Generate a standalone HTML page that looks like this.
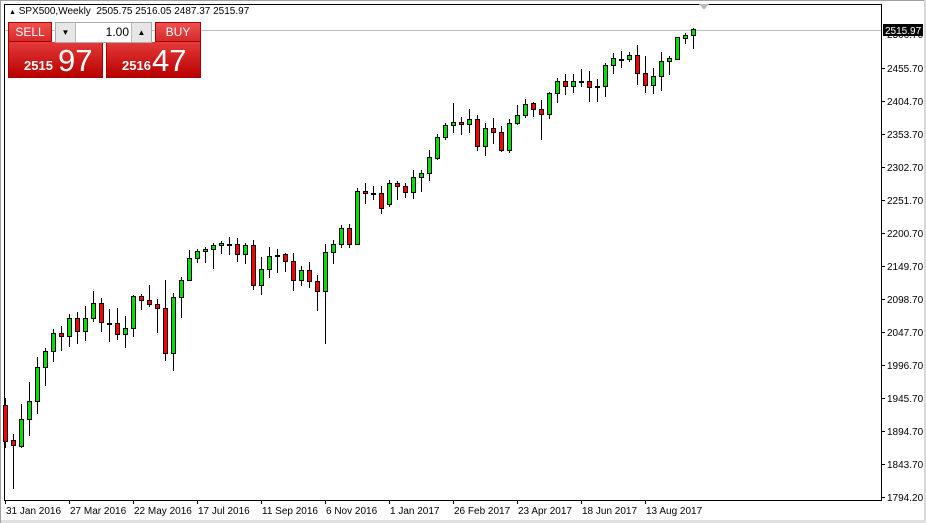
<!DOCTYPE html>
<html><head><meta charset="utf-8"><style>
html,body{margin:0;padding:0;background:#fff;width:926px;height:523px;overflow:hidden;font-family:"Liberation Sans",Tahoma,sans-serif}
svg{position:absolute;left:0;top:0}
.p{position:absolute;box-sizing:border-box}
.red{background:linear-gradient(#e53a3a,#b80000);color:#fff}
</style></head><body>
<svg id="s" width="926" height="523" shape-rendering="crispEdges"></svg>
<div class="p red" style="left:8px;top:22px;width:44px;height:20px;border:1px solid #a00;text-align:center;font-size:12px;line-height:18px;background:linear-gradient(#f05050,#d62a2a)">SELL</div>
<div class="p red" style="left:8px;top:42px;width:95px;height:36px;border:1px solid #a00;border-top:none"><span style="position:absolute;left:15px;top:16px;font-size:13px;font-weight:bold">2515</span><span style="position:absolute;left:49px;top:1px;font-size:31px">97</span></div>
<div class="p red" style="left:155px;top:22px;width:46px;height:20px;border:1px solid #a00;text-align:center;font-size:12px;line-height:18px;background:linear-gradient(#f05050,#d62a2a)">BUY</div>
<div class="p red" style="left:106px;top:42px;width:95px;height:36px;border:1px solid #a00;border-top:none"><span style="position:absolute;left:15px;top:16px;font-size:13px;font-weight:bold">2516</span><span style="position:absolute;left:45px;top:1px;font-size:31px">47</span></div>
<div class="p" style="left:55px;top:22px;width:97px;height:21px;border:1px solid #aaa;background:#fff"></div>
<div class="p" style="left:56px;top:23px;width:20px;height:19px;background:#e6e6e6;border-right:1px solid #bbb;font-size:8px;text-align:center;line-height:19px">▼</div>
<div class="p" style="left:131px;top:23px;width:20px;height:19px;background:#e6e6e6;border-left:1px solid #bbb;font-size:8px;text-align:center;line-height:19px">▲</div>
<div class="p" style="left:78px;top:23px;width:51px;height:19px;font-size:12px;text-align:right;line-height:19px">1.00</div>
<div class="p" style="left:9px;top:5px;font-size:10px;line-height:13px;white-space:nowrap"><span style="font-size:7px">▲</span> SPX500,Weekly&nbsp; 2505.75 2516.05 2487.37 2515.97</div>
<script>
var s=document.getElementById('s'),h='';
function r(x,y,w,hh,c){h+='<rect x="'+x+'" y="'+y+'" width="'+w+'" height="'+hh+'" fill="'+c+'"/>';}
function t(x,y,str,c,a){h+='<text x="'+x+'" y="'+y+'" font-size="10" fill="'+(c||'#000')+'" font-family="Liberation Sans,Tahoma,sans-serif"'+(a?' text-anchor="'+a+'"':'')+'>'+str+'</text>';}
r(0,0,926,1,'#a0a0a0');r(924,0,2,523,'#d8d8d8');r(0,520,926,3,'#e0e0e0');r(0,0,1,523,'#a0a0a0');
r(4,4,878,1,'#000');r(4,4,1,497,'#000');r(881,4,1,497,'#000');r(4,500,878,1,'#000');
h+='<polygon points="699,4 709,4 704,10" fill="#bbb"/>';
r(5,30,876,1,'#c0c0c0');
var P=[[2455.70,68],[2404.70,101],[2353.70,134],[2302.70,167],[2251.70,200],[2200.70,233],[2149.70,266],[2098.70,299],[2047.70,332],[1996.70,365],[1945.70,398],[1894.70,431],[1843.70,464],[1794.20,497]];
P.forEach(function(p){r(882,p[1],3,1,'#000');t(887,p[1]+4,p[0].toFixed(2));});
t(887,38,'2506.70');
var D=['31 Jan 2016','27 Mar 2016','22 May 2016','17 Jul 2016','11 Sep 2016','6 Nov 2016','1 Jan 2017','26 Feb 2017','23 Apr 2017','18 Jun 2017','13 Aug 2017'];
D.forEach(function(d,i){var x=5+64*i;r(x,500,1,4,'#000');t(x+1,514,d);});
var C=[[405,441,398,447],[440,445,434,488],[446,419,404,447],[419,401,382,435],[401,367,357,413],[367,351,348,385],[351,333,329,361],[333,336,326,350],[336,318,314,346],[318,331,312,343],[331,318,306,340],[318,303,291,321],[303,322,298,331],[323,323,309,341],[323,334,308,339],[334,328,316,347],[328,296,295,336],[296,300,294,309],[300,304,285,306],[304,308,299,332],[308,353,280,360],[353,297,293,370],[297,280,277,317],[280,258,250,280],[258,251,249,262],[251,249,247,262],[249,245,243,268],[245,243,241,253],[244,244,237,254],[244,254,238,261],
[254,245,243,263],[245,285,240,289],[285,269,257,294],[269,256,247,277],[255,255,249,272],[254,261,253,271],[261,280,253,290],[280,270,266,285],[270,281,262,287],[281,291,275,310],[291,252,244,343],[252,244,240,263],[244,228,225,247],[228,244,224,247],[244,191,188,244],[191,193,183,203],[193,193,186,199],[193,208,186,213],[204,183,180,206],[183,186,181,199],[186,192,183,197],[192,177,170,198],[177,173,170,191],[173,157,150,180],
[158,137,134,159],[137,125,123,139],[125,122,103,132],[122,124,117,134],[124,119,109,132],[119,146,115,150],[146,128,123,155],[128,132,118,143],[132,150,126,151],[150,123,119,152],[123,115,105,124],[115,104,99,117],[103,109,102,116],[109,114,100,139],[114,93,92,118],[93,81,78,102],[81,86,74,94],[86,81,74,92],[81,81,69,86],[81,87,71,101],[86,86,79,101],[86,65,63,96],[65,58,53,73],[59,59,51,67],[59,55,52,61],[55,73,45,84],[73,85,56,92],[85,76,68,93],[76,61,52,90],[61,58,56,74],[59,37,37,59],[38,35,33,43],[35,29,28,48]];
C.forEach(function(c,i){var x=5+8*i,o=c[0],cl=c[1],hi=c[2],lo=c[3];
 var top=Math.min(o,cl),bot=Math.max(o,cl),col=cl<o?'#00e000':'#ff0000';
 r(x,hi,1,lo-hi+1,'#000');
 if(bot-top<2){r(x-2,top,5,2,'#000');}
 else{r(x-2,top,5,bot-top+1,'#000');r(x-1,top+1,3,bot-top-1,col);}
});
r(883,24,40,12,'#000');t(885,34,'2515.97','#fff');
s.innerHTML=h;
</script>
</body></html>
